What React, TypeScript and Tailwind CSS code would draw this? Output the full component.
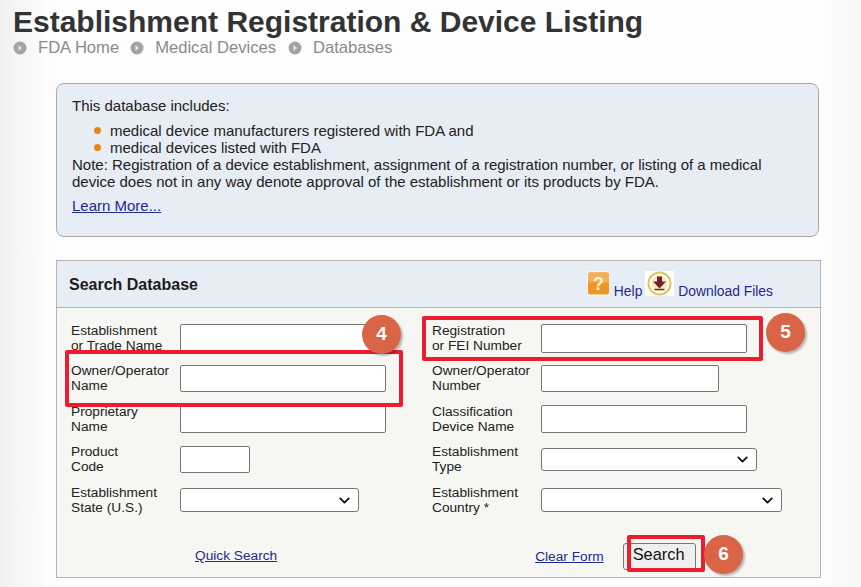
import { ChevronDown } from "lucide-react";

const font = "font-['Liberation_Sans',Arial,sans-serif]";

function Crumb({ label, className }: { label: string; className?: string }) {
  return (
    <span className={`flex items-center ${className ?? ""}`}>
      <svg width="14" height="14" viewBox="0 0 14 14" className="mr-[11px]" aria-hidden="true">
        <circle cx="7" cy="7" r="6.5" fill="#a3a3a3" />
        <path d="M5.5 4 L9 7 L5.5 10 Z" fill="#e8e8e8" />
      </svg>
      {label}
    </span>
  );
}

function Badge({ n, className }: { n: number; className: string }) {
  return (
    <div
      className={`absolute flex h-[39px] w-[39px] items-center justify-center rounded-full bg-[#d96446] text-[19px] font-bold text-white shadow-[2px_2px_2px_rgba(0,0,0,0.25)] ${className}`}
    >
      {n}
    </div>
  );
}

function Label({ lines, className }: { lines: [string, string]; className?: string }) {
  return (
    <div className={`w-[109px] shrink-0 text-[13.7px] leading-[15px] text-[#222] ${className ?? ""}`}>
      {lines[0]}
      <br />
      {lines[1]}
    </div>
  );
}

function TextBox({ className }: { className: string }) {
  return <div className={`rounded-[2px] border border-[#767676] bg-white ${className}`} />;
}

function SelectBox({ className }: { className: string }) {
  return (
    <div className={`flex items-center justify-end rounded-[3px] border border-[#767676] bg-white pr-[5px] ${className}`}>
      <ChevronDown size={17} strokeWidth={2.6} className="text-[#111]" />
    </div>
  );
}

function Row({ left, right, className }: { left: React.ReactNode; right: React.ReactNode; className: string }) {
  return (
    <div className={`flex items-start ${className}`}>
      <div className="flex w-[361px] shrink-0 items-start">{left}</div>
      <div className="flex items-start">{right}</div>
    </div>
  );
}

export default function App() {
  return (
    <div className={`relative h-[587px] w-[861px] overflow-hidden bg-[linear-gradient(90deg,#f1f1f1_0px,#fdfdfd_50px,#fdfdfd_820px,#f7f7f7_861px)] ${font}`}>
      <div className="px-[13px] pt-[4px]">
        <h1 className="text-[30px] font-bold leading-[35px] text-[#333]">Establishment Registration &amp; Device Listing</h1>
        <nav className="-mt-[1px] flex h-[20px] items-center text-[16.6px] text-[#8b8b8b]">
          <Crumb label="FDA Home" className="mr-[11px]" />
          <Crumb label="Medical Devices" className="mr-[12px]" />
          <Crumb label="Databases" />
        </nav>
      </div>

      <section className="ml-[56px] mt-[25px] h-[154px] w-[763px] rounded-[8px] border border-[#a8a8a8] bg-[#e6edf4] px-[15px] pt-[13px] text-[15px] leading-[17px] text-[#222]">
        <p>This database includes:</p>
        <ul className="mt-[8px]">
          <li className="flex items-center">
            <span className="ml-[22px] mr-[9px] h-[7px] w-[7px] rounded-full bg-[#e8870e]" />
            medical device manufacturers registered with FDA and
          </li>
          <li className="flex items-center">
            <span className="ml-[22px] mr-[9px] h-[7px] w-[7px] rounded-full bg-[#e8870e]" />
            medical devices listed with FDA
          </li>
        </ul>
        <p>
          Note: Registration of a device establishment, assignment of a registration number, or listing of a medical
          <br />
          device does not in any way denote approval of the establishment or its products by FDA.
        </p>
        <a className="mt-[7px] block text-[#1f2a8c] underline">Learn More...</a>
      </section>

      <section className="ml-[56px] mt-[23px] h-[318px] w-[765px] border border-[#b4b4b4] bg-[#f6f7f2]">
        <header className="flex h-[47px] items-start justify-between border-b border-[#b4b4b4] bg-[#e6edf4] pl-[12px]">
          <h2 className="mt-[15px] text-[16px] font-bold leading-[17px] text-[#1c1c1c]">Search Database</h2>
          <div className="mr-[47px] mt-[10px] flex items-end text-[13.85px] leading-[16px] text-[#1f2a8c]">
            <svg width="23" height="25" viewBox="0 0 23 25" aria-hidden="true">
              <rect width="23" height="25" fill="#f6f6f0" />
              <rect x="1" y="1.5" width="21" height="22" rx="2" fill="#ee9528" />
              <rect x="1" y="1.5" width="21" height="10" rx="2" fill="#f4ae55" />
              <text x="11.5" y="19" textAnchor="middle" fontSize="18" fontWeight="700" fill="#fdf3d8" fontFamily="Liberation Sans">?</text>
            </svg>
            <span className="-mb-[3px] ml-[4px] mr-[3px]">Help</span>
            <svg width="29" height="25" viewBox="0 0 29 25" aria-hidden="true">
              <rect width="29" height="25" fill="#fff" />
              <circle cx="14.5" cy="12.5" r="11" fill="#fff" stroke="#e2c45c" strokeWidth="2" />
              <circle cx="14.5" cy="12.5" r="8" fill="#f6e9c4" />
              <path d="M12 5.5h5v5h4l-6.5 7-6.5-7h4z" fill="#7a1f24" />
              <path d="M9.5 18.5h10" stroke="#7a1f24" strokeWidth="1.4" />
            </svg>
            <span className="-mb-[3px] ml-[4px]">Download Files</span>
          </div>
        </header>

        <div className="pl-[14px] pt-[15px]">
          <Row
            className="h-[40px]"
            left={<><Label lines={["Establishment", "or Trade Name"]} /><TextBox className="mt-[1px] h-[29px] w-[206px]" /></>}
            right={<><Label lines={["Registration", "or FEI Number"]} /><TextBox className="mt-[1px] h-[29px] w-[206px]" /></>}
          />
          <Row
            className="h-[41px]"
            left={<><Label lines={["Owner/Operator", "Name"]} /><TextBox className="mt-[2px] h-[27px] w-[206px]" /></>}
            right={<><Label lines={["Owner/Operator", "Number"]} /><TextBox className="mt-[2px] h-[27px] w-[178px]" /></>}
          />
          <Row
            className="h-[40px]"
            left={<><Label lines={["Proprietary", "Name"]} /><TextBox className="mt-[1px] h-[28px] w-[206px]" /></>}
            right={<><Label lines={["Classification", "Device Name"]} /><TextBox className="mt-[1px] h-[28px] w-[206px]" /></>}
          />
          <Row
            className="h-[41px]"
            left={<><Label lines={["Product", "Code"]} /><TextBox className="mt-[2px] h-[27px] w-[70px]" /></>}
            right={<><Label lines={["Establishment", "Type"]} /><SelectBox className="mt-[4px] h-[23px] w-[216px]" /></>}
          />
          <Row
            className="h-[41px]"
            left={<><Label lines={["Establishment", "State (U.S.)"]} /><SelectBox className="mt-[3px] h-[24px] w-[179px]" /></>}
            right={<><Label lines={["Establishment", "Country *"]} /><SelectBox className="mt-[3px] h-[24px] w-[241px]" /></>}
          />
          <div className="mt-[17px] flex items-start text-[13.7px] leading-[16px] text-[#1f2a8c]">
            <a className="ml-[124px] mt-[5px] underline">Quick Search</a>
            <a className="ml-[258px] mt-[6px] underline">Clear Form</a>
            <button className="ml-[19px] h-[27px] w-[73px] rounded-[3px] border border-[#767676] bg-[#efefef] pb-[4px] pl-[4px] text-left text-[16.4px] leading-[21px] text-[#111]">
              <span className="ml-[5px]">Search</span>
            </button>
          </div>
        </div>
      </section>

      {/* callouts from the annotated screenshot */}
      <div className="absolute left-[65px] top-[350px] h-[57px] w-[338px] rounded-[2px] border-4 border-[#ee1c2e]" />
      <div className="absolute left-[422px] top-[316px] h-[45px] w-[341px] rounded-[2px] border-4 border-[#ee1c2e]" />
      <div className="absolute left-[627px] top-[535px] h-[37px] w-[78px] rounded-[2px] border-4 border-[#ee1c2e]" />
      <Badge n={4} className="left-[362px] top-[315px]" />
      <Badge n={5} className="left-[766px] top-[313px]" />
      <Badge n={6} className="left-[704px] top-[535px]" />
    </div>
  );
}
